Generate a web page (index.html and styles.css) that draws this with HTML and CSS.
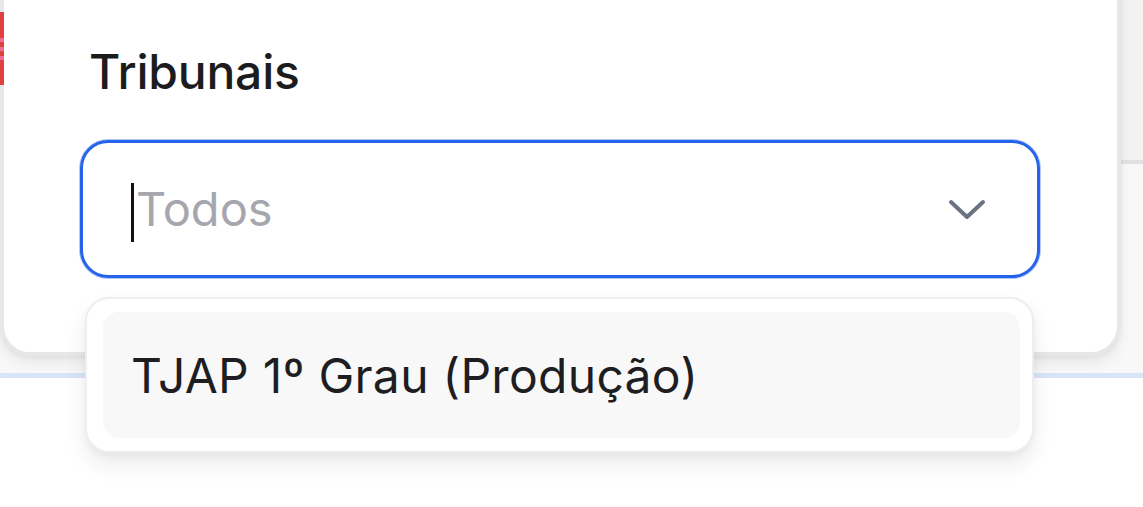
FILE: index.html
```html
<!DOCTYPE html>
<html lang="pt-BR">
<head>
<meta charset="utf-8">
<title>Tribunais</title>
<link rel="stylesheet" href="styles.css">
</head>
<body>
<div class="page">
  <div class="header-band"></div>
  <div class="content-band"></div>
  <div class="lower-band"></div>

  <div class="side-tab"><span class="stripe"></span><span class="stripe"></span><span class="stripe"></span></div>

  <div class="modal">
    <div class="field">
      <div class="label">Tribunais</div>
      <div class="select">
        <span class="caret"></span>
        <span class="placeholder">Todos</span>
        <svg class="chevron" width="40" height="24" viewBox="0 0 40 24" aria-hidden="true">
          <path d="M4 4 L20 19 L36 4" fill="none" stroke="#6b7280" stroke-width="4" stroke-linecap="round" stroke-linejoin="round"/>
        </svg>
      </div>
      <div class="dropdown">
        <div class="option">TJAP 1º Grau (Produção)</div>
      </div>
    </div>
  </div>
</div>
</body>
</html>
```

FILE: styles.css
```css
html, body {
  margin: 0;
  padding: 0;
  background: #ffffff;
  font-family: Inter, "Noto Sans", "Liberation Sans", sans-serif;
}

.page {
  position: relative;
  width: 1143px;
  height: 507px;
  overflow: hidden;
}

.header-band {
  height: 160px;
  background: #f3f3f4;
  border-bottom: 4px solid #e1e1e3;
}

.content-band {
  height: 209px;
  background: #f8f8f8;
  border-bottom: 5px solid #d9e5f7;
}

.lower-band {
  height: 129px;
  background: #ffffff;
}

.side-tab {
  position: absolute;
  left: 0;
  top: 12px;
  width: 4px;
  height: 73px;
  background: #e0403f;
  display: flex;
  flex-direction: column;
  gap: 5px;
  padding-top: 26px;
  box-sizing: border-box;
  z-index: 2;
}

.side-tab .stripe {
  display: block;
  height: 4px;
  background: #ee6e9a;
}

.modal {
  position: absolute;
  left: 0;
  top: -40px;
  width: 1121px;
  height: 396px;
  box-sizing: border-box;
  background: #ffffff;
  border: 4px solid #e7e7e7;
  border-radius: 30px;
  box-shadow: 0 8px 14px rgba(0, 0, 0, 0.06), 0 2px 4px rgba(0, 0, 0, 0.05);
  padding: 79px 0 0 76px;
}

.field {
  position: relative;
  width: 960px;
}

.label {
  font-size: 48px;
  line-height: 58px;
  font-weight: 500;
  color: #1c1c1e;
  margin-left: 9px;
  letter-spacing: -0.2px;
}

.select {
  margin-top: 39px;
  height: 138px;
  box-sizing: border-box;
  border: 3px solid #2563eb;
  border-radius: 28px;
  box-shadow: 0 0 0 1px rgba(37, 99, 235, 0.35);
  display: flex;
  align-items: center;
  padding: 0 50px 0 48px;
  background: #ffffff;
}

.caret {
  display: block;
  width: 3px;
  height: 59px;
  background: #111111;
  margin-top: 6px;
}

.placeholder {
  margin-left: 2px;
  font-size: 47px;
  line-height: 58px;
  color: #a6a6ae;
  flex: 1;
}

.chevron {
  display: block;
  margin-top: 2px;
}

.dropdown {
  position: absolute;
  left: 5px;
  top: 254px;
  width: 949px;
  box-sizing: border-box;
  background: #ffffff;
  border: 2px solid #eeeeee;
  border-radius: 24px;
  padding: 13px 12px 13px 16px;
  box-shadow: 0 12px 22px rgba(0, 0, 0, 0.08), 0 3px 6px rgba(0, 0, 0, 0.04);
  z-index: 3;
}

.option {
  height: 126px;
  background: #f8f8f8;
  border-radius: 16px;
  display: flex;
  align-items: center;
  padding-left: 28px;
  font-size: 48px;
  letter-spacing: 0.3px;
  color: #1e1e22;
}
```
